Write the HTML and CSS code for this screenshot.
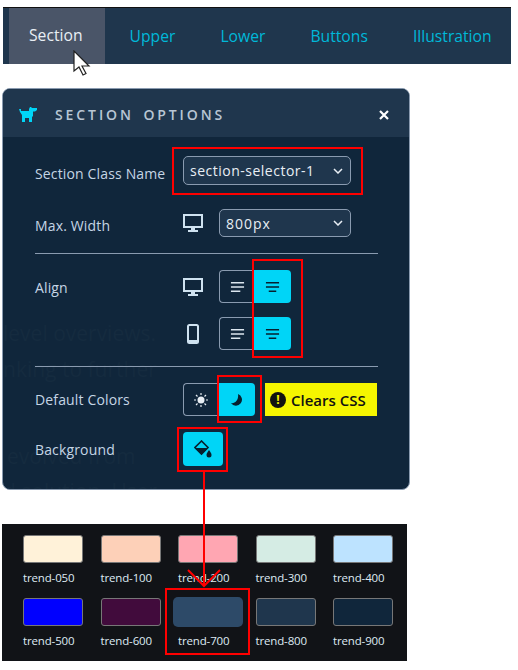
FILE: index.html
```html
<!DOCTYPE html>
<html lang="en">
<head>
    <meta charset="UTF-8">
    <title>Section Options</title>
    <link rel="stylesheet" href="styles.css">
</head>
<body>
    <nav class="tabs">
        <a class="tab tab-active">Section</a>
        <a class="tab">Upper</a>
        <a class="tab">Lower</a>
        <a class="tab">Buttons</a>
        <a class="tab">Illustration</a>
    </nav>

    <section class="panel">
        <span class="ghost ghost-1">level overviews.</span>
        <span class="ghost ghost-2">nking to further</span>
        <span class="ghost ghost-3">evolved from</span>
        <span class="ghost ghost-4">d solution. User</span>

        <header class="panel-head">
            <svg class="dog" width="18" height="15" viewBox="0 0 18 15"><path d="M0 2h2v2h8V2l1-2h1l1 1h5v2l-2 1.500h-2V9l-1 1v5h-3v-4H6v4H3V8L1 5z" fill="#00d5f7"/></svg>
            <h2 class="panel-title">SECTION OPTIONS</h2>
            <svg class="close" width="10" height="10" viewBox="0 0 10 10"><path d="M1 1l8 8M9 1l-8 8" stroke="#fff" stroke-width="2.200"/></svg>
        </header>

        <div class="panel-body">
            <div class="row row-class">
                <label class="label">Section Class Name</label>
                <div class="select select-wide">section-selector-1<svg class="chev" width="10" height="6" viewBox="0 0 10 6"><path d="M1 1l4 4 4-4" fill="none" stroke="#e8eef4" stroke-width="1.500"/></svg></div>
            </div>
            <div class="row row-width">
                <label class="label">Max. Width</label>
                <svg class="device" width="20" height="18" viewBox="0 0 20 18"><path d="M1 1h18v12H1z" fill="none" stroke="#cfe2f0" stroke-width="2"/><path d="M8 14h4v2h3v2H5v-2h3z" fill="#cfe2f0"/></svg>
                <div class="select select-narrow">800px<svg class="chev" width="10" height="6" viewBox="0 0 10 6"><path d="M1 1l4 4 4-4" fill="none" stroke="#e8eef4" stroke-width="1.500"/></svg></div>
            </div>
            <hr class="divider">
            <div class="row row-align">
                <label class="label">Align</label>
                <svg class="device" width="20" height="18" viewBox="0 0 20 18"><path d="M1 1h18v12H1z" fill="none" stroke="#cfe2f0" stroke-width="2"/><path d="M8 14h4v2h3v2H5v-2h3z" fill="#cfe2f0"/></svg>
                <div class="toggle">
                    <span class="toggle-btn"><svg width="15" height="12" viewBox="0 0 16 12"><path d="M1 1.500h14M1 6h14M1 10.500h10" stroke="#dbe6ef" stroke-width="1.500"/></svg></span>
                    <span class="toggle-btn toggle-on"><svg width="15" height="12" viewBox="0 0 16 12"><path d="M1 1.500h14M1 6h14M4 10.500h8" stroke="#06202f" stroke-width="1.500"/></svg></span>
                </div>
            </div>
            <div class="row row-align row-align-2">
                <span class="label"></span>
                <svg class="device" width="20" height="20" viewBox="0 0 20 20"><rect x="5" y="1" width="10" height="18" rx="1.500" fill="none" stroke="#cfe2f0" stroke-width="2"/><path d="M5 16h10v3H5z" fill="#cfe2f0"/></svg>
                <div class="toggle">
                    <span class="toggle-btn"><svg width="15" height="12" viewBox="0 0 16 12"><path d="M1 1.500h14M1 6h14M1 10.500h10" stroke="#dbe6ef" stroke-width="1.500"/></svg></span>
                    <span class="toggle-btn toggle-on"><svg width="15" height="12" viewBox="0 0 16 12"><path d="M1 1.500h14M1 6h14M4 10.500h8" stroke="#06202f" stroke-width="1.500"/></svg></span>
                </div>
            </div>
            <hr class="divider">
            <div class="row row-colors">
                <label class="label">Default Colors</label>
                <div class="toggle">
                    <span class="toggle-btn"><svg width="14" height="14" viewBox="0 0 14 14"><circle cx="7" cy="7" r="3.500" fill="#e8eef4"/><path d="M7 0v2M7 12v2M0 7h2M12 7h2M2 2l1.500 1.500M10.500 10.500L12 12M2 12l1.500-1.500M10.500 3.500L12 2" stroke="#e8eef4" stroke-width="1.200"/></svg></span>
                    <span class="toggle-btn toggle-on"><svg width="14" height="14" viewBox="0 0 14 14"><path d="M8 1a6 6 0 1 1-7 9c4 1 8-3 7-9z" fill="#06202f"/></svg></span>
                </div>
                <div class="warn"><span class="warn-icon">!</span>Clears CSS</div>
            </div>
            <div class="row row-bg">
                <label class="label">Background</label>
                <span class="bucket"><svg width="18" height="18" viewBox="0 0 18 18"><path d="M7.500 1L1 7.500l6.500 6.500L14 7.500z" fill="none" stroke="#06202f" stroke-width="1.600"/><path d="M1.500 8h12.500l-6.500 6.500z" fill="#06202f"/><path d="M15 10c1.500 2 2.500 3.500 2.500 5a2.500 2.500 0 0 1-5 0c0-1.500 1-3 2.500-5z" fill="#06202f"/></svg></span>
            </div>
        </div>
    </section>

    <section class="swatches">
        <div class="swatch"><span class="chip c050"></span>trend-050</div>
        <div class="swatch"><span class="chip c100"></span>trend-100</div>
        <div class="swatch"><span class="chip c200"></span>trend-200</div>
        <div class="swatch"><span class="chip c300"></span>trend-300</div>
        <div class="swatch"><span class="chip c400"></span>trend-400</div>
        <div class="swatch"><span class="chip c500"></span>trend-500</div>
        <div class="swatch"><span class="chip c600"></span>trend-600</div>
        <div class="swatch swatch-picked"><span class="chip c700"></span>trend-700</div>
        <div class="swatch"><span class="chip c800"></span>trend-800</div>
        <div class="swatch"><span class="chip c900"></span>trend-900</div>
    </section>

    <!-- annotations drawn on top of the screenshot -->
    <svg class="marks" width="518" height="670" viewBox="0 0 518 670">
        <g fill="none" stroke="#f00" stroke-width="2">
            <rect x="173" y="148" width="189" height="46"/>
            <rect x="253" y="260" width="49" height="97"/>
            <rect x="218" y="376" width="43" height="46"/>
            <rect x="178" y="428" width="49" height="43"/>
            <rect x="166" y="589" width="83" height="65"/>
            <path d="M204 472V586M188 570l16 16 16-16"/>
        </g>
    </svg>
    <svg class="cursor" width="18" height="26" viewBox="0 0 18 26"><path d="M1 1v20l5-4 4 8 3-1.500-4-7.500h7z" fill="#fff" stroke="#222" stroke-width="1.200"/></svg>
</body>
</html>
```

FILE: styles.css
```css
body {
    font-family: "Open Sans", "Noto Sans", sans-serif;
    background-color: #fff;
    margin: 0;
    padding: 0;
    height: 670px;
    overflow: hidden;
}

.tabs {
    display: flex;
    gap: 5px;
    height: 56px;
    margin: 7px 7px 0 3px;
    padding-left: 6px;
    background-color: #1f364d;
    border-top: 1px solid #111;
}

.tab {
    padding: 0 20px;
    font-size: 15.700px;
    line-height: 56px;
    color: #00b8d9;
}

.tab-active {
    padding-right: 22px;
    background-color: #4a5568;
    color: #e8eef4;
    line-height: 54px;
}

.panel {
    position: relative;
    box-sizing: border-box;
    width: 408px;
    height: 402px;
    margin: 24px 0 0 2px;
    background-color: #10263b;
    border: 1px solid #8a9bb0;
    border-radius: 8px;
    overflow: hidden;
}

.ghost {
    position: absolute;
    font-size: 21px;
    color: #152b3f;
    white-space: nowrap;
}

.ghost-1 { left: 0; top: 230px; }
.ghost-2 { left: 0; top: 266px; }
.ghost-3 { left: 4px; top: 353px; }
.ghost-4 { left: 0; top: 388px; }

.panel-head {
    position: relative;
    display: flex;
    align-items: center;
    box-sizing: border-box;
    height: 48px;
    padding: 3px 20px 0 16px;
    background-color: #1f364d;
}

.panel-title {
    flex: 1;
    margin: 0 0 0 18px;
    font-size: 14px;
    font-weight: 600;
    letter-spacing: 2.900px;
    word-spacing: 3px;
    color: #b8c6d4;
}

.panel-body {
    position: relative;
    padding: 0 31px 0 32px;
}

.row {
    display: flex;
    align-items: center;
}

.label {
    width: 148px;
    flex-shrink: 0;
    font-size: 14px;
    letter-spacing: 0.150px;
    color: #c5d5e5;
}

.row-class { height: 29px; margin-top: 19px; }
.row-width { height: 28px; margin-top: 24px; }
.row-align { height: 33px; margin-top: 16px; }
.row-align-2 { margin-top: 14px; }
.row-colors { height: 33px; margin-top: 16px; }
.row-bg { height: 34px; margin-top: 16px; }

.row-class .label,
.row-width .label {
    padding-top: 5px;
}

.row-align .label {
    padding-top: 1px;
}

.device {
    width: 20px;
    margin-right: 16px;
    flex-shrink: 0;
}

.select {
    display: flex;
    align-items: center;
    justify-content: space-between;
    box-sizing: border-box;
    height: 100%;
    padding: 0 7px 0 6px;
    background-color: #1f364d;
    border: 1px solid #8a9bb0;
    border-radius: 5px;
    font-size: 14px;
    color: #e8eef4;
}

.select-wide { width: 168px; letter-spacing: 0.500px; }
.select-narrow { width: 132px; letter-spacing: 1px; }

.divider {
    height: 1px;
    margin: 16px 0 0;
    border: 0;
    background-color: #8a9bb0;
}

.toggle {
    display: flex;
    height: 33px;
}

.toggle-btn {
    display: flex;
    align-items: center;
    justify-content: center;
    box-sizing: border-box;
    width: 35px;
    border: 1px solid #8a9bb0;
    border-right: 0;
    border-radius: 4px 0 0 4px;
}

.toggle-on {
    width: 37px;
    background-color: #00d5f7;
    border: 0;
    border-radius: 0 4px 4px 0;
}

.warn {
    display: flex;
    align-items: center;
    gap: 5px;
    width: 112px;
    height: 33px;
    margin-left: 10px;
    padding-left: 5px;
    box-sizing: border-box;
    background-color: #f5f500;
    font-size: 15px;
    font-weight: 600;
    color: #111;
}

.warn-icon {
    width: 16px;
    height: 16px;
    border-radius: 50%;
    background-color: #111;
    color: #f5f500;
    font-size: 12px;
    font-weight: 700;
    line-height: 16px;
    text-align: center;
}

.bucket {
    display: flex;
    align-items: center;
    justify-content: center;
    width: 40px;
    height: 34px;
    background-color: #00d5f7;
    border-radius: 4px;
}

.swatches {
    display: grid;
    grid-template-columns: repeat(5, 60px);
    align-content: start;
    column-gap: 17.500px;
    row-gap: 16px;
    box-sizing: border-box;
    width: 405px;
    height: 137px;
    margin: 34px 0 0 2px;
    padding: 11px 0 0 21px;
    background-color: #111317;
    font-size: 11.500px;
    letter-spacing: -0.150px;
    color: #dfeaf3;
}

.swatch {
    height: 47px;
    line-height: 16px;
    white-space: nowrap;
}

.chip {
    display: block;
    box-sizing: border-box;
    height: 28px;
    margin-bottom: 7px;
    border: 1px solid #777;
    border-radius: 3px;
}

.swatch-picked .chip {
    width: 70px;
    height: 30px;
    margin: -1px 0 6px -5px;
    border: 0;
    border-radius: 5px;
}

.c050 { background-color: #fff2d9; }
.c100 { background-color: #fdd0b8; }
.c200 { background-color: #ffa6b2; }
.c300 { background-color: #d5ece4; }
.c400 { background-color: #bde3ff; }
.c500 { background-color: #0000ff; }
.c600 { background-color: #410b3c; }
.c700 { background-color: #2d4a68; }
.c800 { background-color: #1f364d; }
.c900 { background-color: #10263b; }

.marks {
    position: absolute;
    left: 0;
    top: 0;
    pointer-events: none;
}

.cursor {
    position: absolute;
    left: 73px;
    top: 50px;
}
```
